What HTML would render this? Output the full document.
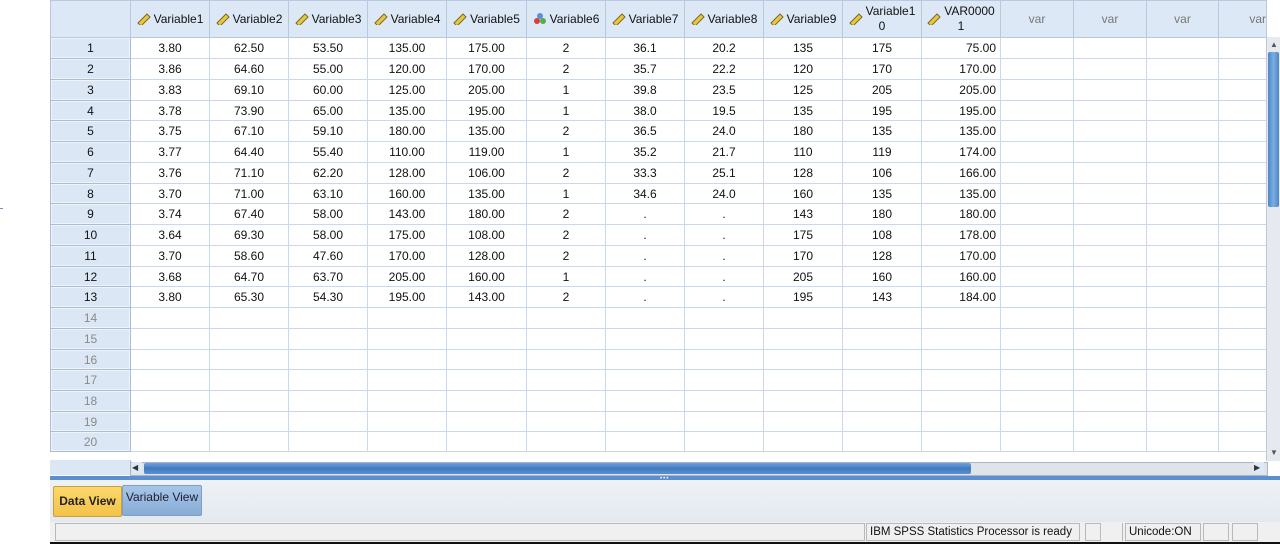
<!DOCTYPE html>
<html><head><meta charset="utf-8"><style>
body{margin:0;width:1280px;height:544px;background:#fff;position:relative;overflow:hidden;font-family:"Liberation Sans",Arial,sans-serif;font-size:12px;color:#111}
table{position:absolute;left:50px;top:0;border-collapse:collapse;table-layout:fixed}
td{border:1px solid #c9d8ec;padding:0;text-align:center;white-space:nowrap;overflow:hidden}
tr.h td{background:#dde8f6;height:36px;border-color:#b8c9df}
td.r{background:#dce7f5;border:1px solid #a9bdd8;box-shadow:inset 0 0 0 1px #eef4fb}
td.g{color:#8a8a8a}
td.v{text-align:right;padding-right:4px}
.var{color:#777}
svg{vertical-align:-2px;margin-right:3px}
.sb{position:absolute;top:523px;height:18px;border:1px solid #b9b9b9;box-sizing:border-box;white-space:nowrap;overflow:hidden;font-size:11.5px;line-height:16px;padding-left:3px}
</style></head><body>
<div style="position:absolute;left:0;top:208px;width:3px;height:1px;background:#6b8fc8"></div>
<table>
<colgroup><col style="width:80px"><col style="width:79px"><col style="width:79px"><col style="width:79px"><col style="width:79px"><col style="width:80px"><col style="width:79px"><col style="width:79px"><col style="width:79px"><col style="width:79px"><col style="width:79px"><col style="width:79px"><col style="width:73px"><col style="width:73px"><col style="width:72px"><col style="width:48px"></colgroup>
<tr class="h"><td></td>
<td><svg width="14" height="12" viewBox="0 0 14 12"><path d="M1 10 L10 1 L13 4 L4 13Z" fill="#e8c840" stroke="#7a6a20" stroke-width="1"/></svg>Variable1</td>
<td><svg width="14" height="12" viewBox="0 0 14 12"><path d="M1 10 L10 1 L13 4 L4 13Z" fill="#e8c840" stroke="#7a6a20" stroke-width="1"/></svg>Variable2</td>
<td><svg width="14" height="12" viewBox="0 0 14 12"><path d="M1 10 L10 1 L13 4 L4 13Z" fill="#e8c840" stroke="#7a6a20" stroke-width="1"/></svg>Variable3</td>
<td><svg width="14" height="12" viewBox="0 0 14 12"><path d="M1 10 L10 1 L13 4 L4 13Z" fill="#e8c840" stroke="#7a6a20" stroke-width="1"/></svg>Variable4</td>
<td><svg width="14" height="12" viewBox="0 0 14 12"><path d="M1 10 L10 1 L13 4 L4 13Z" fill="#e8c840" stroke="#7a6a20" stroke-width="1"/></svg>Variable5</td>
<td><svg width="14" height="13" viewBox="0 0 14 13"><circle cx="7" cy="4" r="3" fill="#5b8fd8"/><circle cx="4" cy="9" r="3" fill="#d84040"/><circle cx="10" cy="9" r="3" fill="#50b050"/></svg>Variable6</td>
<td><svg width="14" height="12" viewBox="0 0 14 12"><path d="M1 10 L10 1 L13 4 L4 13Z" fill="#e8c840" stroke="#7a6a20" stroke-width="1"/></svg>Variable7</td>
<td><svg width="14" height="12" viewBox="0 0 14 12"><path d="M1 10 L10 1 L13 4 L4 13Z" fill="#e8c840" stroke="#7a6a20" stroke-width="1"/></svg>Variable8</td>
<td><svg width="14" height="12" viewBox="0 0 14 12"><path d="M1 10 L10 1 L13 4 L4 13Z" fill="#e8c840" stroke="#7a6a20" stroke-width="1"/></svg>Variable9</td>
<td style="line-height:15px"><svg width="14" height="12" viewBox="0 0 14 12" style="position:relative;top:8px"><path d="M1 10 L10 1 L13 4 L4 13Z" fill="#e8c840" stroke="#7a6a20" stroke-width="1"/></svg>Variable1<br>0</td>
<td style="line-height:15px"><svg width="14" height="12" viewBox="0 0 14 12" style="position:relative;top:8px"><path d="M1 10 L10 1 L13 4 L4 13Z" fill="#e8c840" stroke="#7a6a20" stroke-width="1"/></svg>VAR0000<br>1</td>
<td class="var">var</td><td class="var">var</td><td class="var">var</td><td class="var" style="text-align:right">var</td></tr>
<tr style="height:21px"><td class="r">1</td><td>3.80</td><td>62.50</td><td>53.50</td><td>135.00</td><td>175.00</td><td>2</td><td>36.1</td><td>20.2</td><td>135</td><td>175</td><td class="v">75.00</td><td></td><td></td><td></td><td></td></tr>
<tr style="height:21px"><td class="r">2</td><td>3.86</td><td>64.60</td><td>55.00</td><td>120.00</td><td>170.00</td><td>2</td><td>35.7</td><td>22.2</td><td>120</td><td>170</td><td class="v">170.00</td><td></td><td></td><td></td><td></td></tr>
<tr style="height:21px"><td class="r">3</td><td>3.83</td><td>69.10</td><td>60.00</td><td>125.00</td><td>205.00</td><td>1</td><td>39.8</td><td>23.5</td><td>125</td><td>205</td><td class="v">205.00</td><td></td><td></td><td></td><td></td></tr>
<tr style="height:20px"><td class="r">4</td><td>3.78</td><td>73.90</td><td>65.00</td><td>135.00</td><td>195.00</td><td>1</td><td>38.0</td><td>19.5</td><td>135</td><td>195</td><td class="v">195.00</td><td></td><td></td><td></td><td></td></tr>
<tr style="height:21px"><td class="r">5</td><td>3.75</td><td>67.10</td><td>59.10</td><td>180.00</td><td>135.00</td><td>2</td><td>36.5</td><td>24.0</td><td>180</td><td>135</td><td class="v">135.00</td><td></td><td></td><td></td><td></td></tr>
<tr style="height:21px"><td class="r">6</td><td>3.77</td><td>64.40</td><td>55.40</td><td>110.00</td><td>119.00</td><td>1</td><td>35.2</td><td>21.7</td><td>110</td><td>119</td><td class="v">174.00</td><td></td><td></td><td></td><td></td></tr>
<tr style="height:21px"><td class="r">7</td><td>3.76</td><td>71.10</td><td>62.20</td><td>128.00</td><td>106.00</td><td>2</td><td>33.3</td><td>25.1</td><td>128</td><td>106</td><td class="v">166.00</td><td></td><td></td><td></td><td></td></tr>
<tr style="height:20px"><td class="r">8</td><td>3.70</td><td>71.00</td><td>63.10</td><td>160.00</td><td>135.00</td><td>1</td><td>34.6</td><td>24.0</td><td>160</td><td>135</td><td class="v">135.00</td><td></td><td></td><td></td><td></td></tr>
<tr style="height:21px"><td class="r">9</td><td>3.74</td><td>67.40</td><td>58.00</td><td>143.00</td><td>180.00</td><td>2</td><td>.</td><td>.</td><td>143</td><td>180</td><td class="v">180.00</td><td></td><td></td><td></td><td></td></tr>
<tr style="height:21px"><td class="r">10</td><td>3.64</td><td>69.30</td><td>58.00</td><td>175.00</td><td>108.00</td><td>2</td><td>.</td><td>.</td><td>175</td><td>108</td><td class="v">178.00</td><td></td><td></td><td></td><td></td></tr>
<tr style="height:21px"><td class="r">11</td><td>3.70</td><td>58.60</td><td>47.60</td><td>170.00</td><td>128.00</td><td>2</td><td>.</td><td>.</td><td>170</td><td>128</td><td class="v">170.00</td><td></td><td></td><td></td><td></td></tr>
<tr style="height:20px"><td class="r">12</td><td>3.68</td><td>64.70</td><td>63.70</td><td>205.00</td><td>160.00</td><td>1</td><td>.</td><td>.</td><td>205</td><td>160</td><td class="v">160.00</td><td></td><td></td><td></td><td></td></tr>
<tr style="height:21px"><td class="r">13</td><td>3.80</td><td>65.30</td><td>54.30</td><td>195.00</td><td>143.00</td><td>2</td><td>.</td><td>.</td><td>195</td><td>143</td><td class="v">184.00</td><td></td><td></td><td></td><td></td></tr>
<tr style="height:21px"><td class="r g">14</td><td></td><td></td><td></td><td></td><td></td><td></td><td></td><td></td><td></td><td></td><td></td><td></td><td></td><td></td><td></td></tr>
<tr style="height:21px"><td class="r g">15</td><td></td><td></td><td></td><td></td><td></td><td></td><td></td><td></td><td></td><td></td><td></td><td></td><td></td><td></td><td></td></tr>
<tr style="height:20px"><td class="r g">16</td><td></td><td></td><td></td><td></td><td></td><td></td><td></td><td></td><td></td><td></td><td></td><td></td><td></td><td></td><td></td></tr>
<tr style="height:21px"><td class="r g">17</td><td></td><td></td><td></td><td></td><td></td><td></td><td></td><td></td><td></td><td></td><td></td><td></td><td></td><td></td><td></td></tr>
<tr style="height:21px"><td class="r g">18</td><td></td><td></td><td></td><td></td><td></td><td></td><td></td><td></td><td></td><td></td><td></td><td></td><td></td><td></td><td></td></tr>
<tr style="height:20px"><td class="r g">19</td><td></td><td></td><td></td><td></td><td></td><td></td><td></td><td></td><td></td><td></td><td></td><td></td><td></td><td></td><td></td></tr>
<tr style="height:20px"><td class="r g">20</td><td></td><td></td><td></td><td></td><td></td><td></td><td></td><td></td><td></td><td></td><td></td><td></td><td></td><td></td><td></td></tr>
</table>
<div style="position:absolute;left:1266px;top:37px;width:14px;height:424px;background:#e6eaf0;border-left:1px solid #c0c8d4"></div>
<div style="position:absolute;left:1268px;top:52px;width:11px;height:155px;background:linear-gradient(90deg,#4d86c8,#7aaee0,#4d86c8);border-radius:2px"></div>
<div style="position:absolute;left:1270px;top:40px;font-size:8px;color:#555">▲</div>
<div style="position:absolute;left:1270px;top:448px;font-size:8px;color:#555">▼</div>
<div style="position:absolute;left:50px;top:460px;width:80px;height:15px;background:#dce7f5;border-right:1px solid #a9bdd8"></div>
<div style="position:absolute;left:130px;top:462px;width:1136px;height:12px;background:#dfe3ea;border:1px solid #aab6c6"></div>
<div style="position:absolute;left:144px;top:463px;width:827px;height:11px;background:linear-gradient(#6da3dc,#3f78bf,#5a92d0);border-radius:2px"></div>
<div style="position:absolute;left:132px;top:462px;width:10px;height:11px;background:#dde9f7;font-size:8px;color:#333;line-height:11px">◀</div>
<div style="position:absolute;left:1254px;top:462px;width:10px;height:11px;background:#dde9f7;font-size:8px;color:#333;line-height:11px">▶</div>
<div style="position:absolute;left:50px;top:476px;width:1230px;height:4px;background:#5b8fd0"></div>
<div style="position:absolute;left:50px;top:480px;width:1230px;height:42px;background:linear-gradient(#eef2f7,#e4e9f0)"></div>
<div style="position:absolute;left:660px;top:476px;font-size:6px;color:#fff;letter-spacing:1px">•••</div>
<div style="position:absolute;left:53px;top:486px;width:67px;height:29px;background:linear-gradient(#fbd86a,#f4c24a);border:1px solid #c9a040;border-radius:2px;font-weight:bold;font-size:12px;line-height:29px;text-align:center;color:#222">Data View</div>
<div style="position:absolute;left:122px;top:485px;width:78px;height:29px;background:linear-gradient(#a7c6e8,#88acd6);border:1px solid #7f9ec6;border-radius:2px;font-size:12px;line-height:22px;text-align:center;color:#223">Variable View</div>
<div style="position:absolute;left:50px;top:522px;width:1230px;height:20px;background:#f0f0f0"></div>
<div class="sb" style="left:55px;width:810px"></div>
<div class="sb" style="left:866px;width:214px">IBM SPSS Statistics Processor is ready</div>
<div class="sb" style="left:1085px;width:16px"></div>
<div class="sb" style="left:1103px;width:20px;border-width:0 1px 0 0"></div>
<div class="sb" style="left:1125px;width:76px">Unicode:ON</div>
<div class="sb" style="left:1203px;width:26px"></div>
<div class="sb" style="left:1232px;width:26px"></div>
<div style="position:absolute;left:50px;top:542px;width:1230px;height:2px;background:#111"></div>
</body></html>
